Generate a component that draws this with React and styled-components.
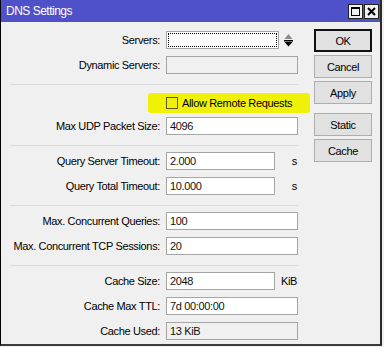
import React from 'react';
import styled, { createGlobalStyle, css } from 'styled-components';

const GlobalStyle = createGlobalStyle`
  html, body {
    margin: 0;
    padding: 0;
    background: #f0f0f0;
  }
  body {
    font-family: "Liberation Sans", Arial, sans-serif;
    font-size: 11px;
    letter-spacing: -0.35px;
    color: #000;
  }
`;

const Window = styled.div`
  width: 382px;
  height: 346px;
  box-sizing: border-box;
  background: #f0f0f0;
  border-left: 1px solid #000;
  border-right: 2px solid #2a2a2a;
  border-bottom: 2px solid #3a3a3a;
  display: flex;
  flex-direction: column;
`;

const TitleBar = styled.div`
  height: 22px;
  flex-shrink: 0;
  background: #4f51c9;
  color: #fff;
  display: flex;
  align-items: center;
  padding: 0 1px 0 5px;
  font-size: 12px;
  letter-spacing: -0.5px;
`;

const Title = styled.div`
  flex: 1;
`;

const TitleButtons = styled.div`
  display: flex;
  gap: 1px;
`;

const TitleButton = styled.div`
  width: 15px;
  height: 15px;
  box-sizing: border-box;
  background: #f0f0f0;
  border: 1px solid #222;
  display: flex;
  align-items: center;
  justify-content: center;
`;

const Body = styled.div`
  display: flex;
  padding-top: 7px;
`;

const Form = styled.div`
  width: 305px;
  padding-top: 2px;
  display: flex;
  flex-direction: column;
`;

const Row = styled.div`
  display: flex;
  align-items: center;
  height: 18px;
  margin-bottom: 7px;
`;

const Label = styled.div`
  width: 159px;
  text-align: right;
  white-space: nowrap;
  margin-right: 6px;
`;

const Field = styled.div`
  width: ${p => p.$width}px;
  height: 18px;
  box-sizing: border-box;
  border: 1px solid #a5a5a5;
  background: ${p => (p.$disabled ? '#f0f0f0' : '#fff')};
  padding: 0 3px;
  display: flex;
  align-items: center;
  color: #111;
  ${p => p.$focused && css`
    outline: 1px dotted #000;
    outline-offset: -3px;
  `}
`;

const Unit = styled.div`
  width: 22px;
  text-align: right;
`;

const Spinner = styled.svg`
  margin-left: 5px;
`;

const Separator = styled.div`
  height: 1px;
  width: 288px;
  margin: 3px 0 6px 9px;
  background: #d9d9d9;
`;

const CheckRow = styled.div`
  display: flex;
  align-items: center;
  width: 144px;
  height: 20px;
  margin: 2px 0 4px 147px;
  padding-left: 18px;
  background: #f1f106;
  border-radius: 3px;
  white-space: nowrap;
`;

const CheckBox = styled.div`
  width: 12px;
  height: 12px;
  box-sizing: border-box;
  border: 1px solid #5a5a30;
  margin-right: 4px;
`;

const ButtonColumn = styled.div`
  display: flex;
  flex-direction: column;
  gap: 3px;
  margin-left: 8px;
`;

const Button = styled.div`
  width: 58px;
  height: 23px;
  box-sizing: border-box;
  background: #e1e1e1;
  border: ${p => (p.$default ? '2px solid #111' : '1px solid #adadad')};
  display: flex;
  align-items: center;
  justify-content: center;
  margin-top: ${p => p.$gapBefore || 0}px;
`;

const FieldRow = ({ label, value, width = 132, unit, disabled, focused, children }) => (
  <Row>
    <Label>{label}</Label>
    <Field $width={width} $disabled={disabled} $focused={focused}>{value}</Field>
    {unit && <Unit>{unit}</Unit>}
    {children}
  </Row>
);

export default function App() {
  return (
    <>
      <GlobalStyle />
      <Window>
        <TitleBar>
          <Title>DNS Settings</Title>
          <TitleButtons>
            <TitleButton>
              <svg width="9" height="9" viewBox="0 0 9 9">
                <rect x="0.5" y="0.5" width="8" height="8" fill="none" stroke="#000" />
                <rect x="0" y="0" width="9" height="2" fill="#000" />
              </svg>
            </TitleButton>
            <TitleButton>
              <svg width="9" height="9" viewBox="0 0 9 9">
                <path d="M1 1 L8 8 M8 1 L1 8" stroke="#000" strokeWidth="2" />
              </svg>
            </TitleButton>
          </TitleButtons>
        </TitleBar>
        <Body>
          <Form>
            <FieldRow label="Servers:" width={113} focused>
              <Spinner width="9" height="14" viewBox="0 0 9 14">
                <path d="M4.5 1 L8.5 6 L0.5 6 Z" fill="#8c8c8c" />
                <rect x="0" y="7" width="9" height="1.5" fill="#000" />
                <path d="M0.5 9 L8.5 9 L4.5 13.5 Z" fill="#000" />
              </Spinner>
            </FieldRow>
            <FieldRow label="Dynamic Servers:" disabled />
            <Separator />
            <CheckRow>
              <CheckBox />
              Allow Remote Requests
            </CheckRow>
            <FieldRow label="Max UDP Packet Size:" value="4096" />
            <Separator />
            <FieldRow label="Query Server Timeout:" value="2.000" width={109} unit="s" />
            <FieldRow label="Query Total Timeout:" value="10.000" width={109} unit="s" />
            <Separator />
            <FieldRow label="Max. Concurrent Queries:" value="100" />
            <FieldRow label="Max. Concurrent TCP Sessions:" value="20" />
            <Separator />
            <FieldRow label="Cache Size:" value="2048" width={109} unit="KiB" />
            <FieldRow label="Cache Max TTL:" value="7d 00:00:00" />
            <FieldRow label="Cache Used:" value="13 KiB" disabled />
          </Form>
          <ButtonColumn>
            <Button $default>OK</Button>
            <Button>Cancel</Button>
            <Button>Apply</Button>
            <Button $gapBefore={6}>Static</Button>
            <Button>Cache</Button>
          </ButtonColumn>
        </Body>
      </Window>
    </>
  );
}
